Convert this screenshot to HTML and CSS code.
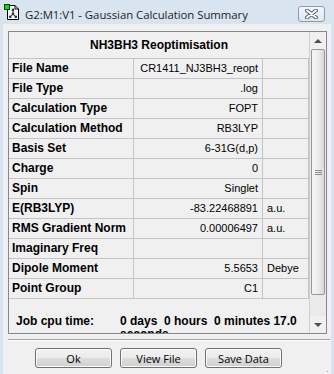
FILE: index.html
```html
<!DOCTYPE html>
<html lang="en">

<head>
    <meta charset="UTF-8">
    <meta name="viewport" content="width=device-width, initial-scale=1.0">
    <title>G2:M1:V1 - Gaussian Calculation Summary</title>
    <link rel="stylesheet" href="styles.css">
</head>

<body>
    <div class="window">
        <!-- Title bar -->
        <div class="titlebar">
            <svg class="app-icon" width="16" height="16" viewBox="0 0 16 16">
                <path d="M3.5 1.5 H11 L14.5 5 V15.5 H3.5 Z" fill="#fff" stroke="#000" />
                <path d="M11 1.5 V5 H14.5" fill="none" stroke="#000" />
                <line x1="9" y1="6" x2="9" y2="10" stroke="#444" />
                <line x1="9" y1="10" x2="6.5" y2="12.5" stroke="#444" />
                <line x1="9" y1="10" x2="11.5" y2="12.5" stroke="#444" />
                <circle cx="9" cy="6" r="1.4" fill="#333" />
                <circle cx="9" cy="10" r="1.4" fill="#333" />
                <circle cx="6.2" cy="12.8" r="1.4" fill="#333" />
                <circle cx="11.8" cy="12.8" r="1.4" fill="#333" />
                <rect x="0.5" y="0.5" width="5" height="5" fill="#19d419" stroke="#064d06" />
            </svg>
            <span class="title">G2:M1:V1 - Gaussian Calculation Summary</span>
            <div class="close-btn">
                <svg width="13" height="10" viewBox="0 0 13 10">
                    <path d="M2 1.5 L11 8.5 M11 1.5 L2 8.5" stroke="#5b6470" stroke-width="4" stroke-linecap="round" />
                    <path d="M2 1.5 L11 8.5 M11 1.5 L2 8.5" stroke="#fff" stroke-width="2" stroke-linecap="round" />
                </svg>
            </div>
        </div>

        <!-- Client area -->
        <div class="client">
            <div class="grid-box">
                <div class="grid-view">
                    <div class="grid-head">NH3BH3 Reoptimisation</div>
                    <div class="grid-row"><div class="label">File Name</div><div class="value">CR1411_NJ3BH3_reopt</div><div class="unit"></div></div>
                    <div class="grid-row"><div class="label">File Type</div><div class="value">.log</div><div class="unit"></div></div>
                    <div class="grid-row"><div class="label">Calculation Type</div><div class="value">FOPT</div><div class="unit"></div></div>
                    <div class="grid-row"><div class="label">Calculation Method</div><div class="value">RB3LYP</div><div class="unit"></div></div>
                    <div class="grid-row"><div class="label">Basis Set</div><div class="value">6-31G(d,p)</div><div class="unit"></div></div>
                    <div class="grid-row"><div class="label">Charge</div><div class="value">0</div><div class="unit"></div></div>
                    <div class="grid-row"><div class="label">Spin</div><div class="value">Singlet</div><div class="unit"></div></div>
                    <div class="grid-row"><div class="label">E(RB3LYP)</div><div class="value">-83.22468891</div><div class="unit">a.u.</div></div>
                    <div class="grid-row"><div class="label">RMS Gradient Norm</div><div class="value">0.00006497</div><div class="unit">a.u.</div></div>
                    <div class="grid-row"><div class="label">Imaginary Freq</div><div class="value"></div><div class="unit"></div></div>
                    <div class="grid-row"><div class="label">Dipole Moment</div><div class="value">5.5653</div><div class="unit">Debye</div></div>
                    <div class="grid-row"><div class="label">Point Group</div><div class="value">C1</div><div class="unit"></div></div>

                    <div class="cpu">
                        <div class="cpu-label">Job cpu time:</div>
                        <div class="cpu-value">0 days  0 hours  0 minutes 17.0 seconds</div>
                    </div>
                </div>

                <div class="scrollbar">
                    <div class="sb-arrow"><span class="tri-up"></span></div>
                    <div class="sb-thumb">
                        <svg width="7" height="5" viewBox="0 0 7 5">
                            <path d="M0 0.5 H7 M0 2.5 H7 M0 4.5 H7" stroke="#8a8a8a" />
                        </svg>
                    </div>
                    <div class="sb-track"></div>
                    <div class="sb-arrow"><span class="tri-down"></span></div>
                </div>
            </div>

            <div class="separator"></div>

            <div class="buttons">
                <button class="btn">Ok</button>
                <button class="btn">View File</button>
                <button class="btn">Save Data</button>
            </div>

            <svg class="size-grip" width="10" height="10" viewBox="0 0 10 10">
                <rect x="8" y="2" width="1" height="1" fill="#a0a0a0" />
                <rect x="5" y="5" width="1" height="1" fill="#a0a0a0" />
                <rect x="8" y="5" width="1" height="1" fill="#a0a0a0" />
                <rect x="2" y="8" width="1" height="1" fill="#a0a0a0" />
                <rect x="5" y="8" width="1" height="1" fill="#a0a0a0" />
                <rect x="8" y="8" width="1" height="1" fill="#a0a0a0" />
            </svg>
        </div>
    </div>
</body>

</html>
```

FILE: styles.css
```css
/* Window frame */

body {
    margin: 0;
    padding: 0;
    background-color: #d9e4f1;
    font-family: 'Liberation Sans', Arial, sans-serif;
    overflow: hidden;
}

.window {
    width: 334px;
    height: 374px;
}

.titlebar {
    height: 24px;
    display: flex;
    align-items: flex-start;
    padding: 0 9px 0 4px;
    box-sizing: border-box;
}

.app-icon {
    margin-top: 4px;
    flex-shrink: 0;
}

.title {
    flex: 1;
    margin: 7px 0 0 5px;
    font-family: 'Open Sans', sans-serif;
    font-size: 11.4px;
    letter-spacing: -0.05px;
    line-height: 16px;
    color: #1e1e1e;
    white-space: nowrap;
}

.close-btn {
    width: 25px;
    height: 14px;
    margin-top: 6px;
    border: 1px solid #8f9bab;
    border-radius: 3px;
    background: linear-gradient(#f4f7fb, #dde5ef);
    display: flex;
    align-items: center;
    justify-content: center;
}

/* Client area */

.client {
    position: relative;
    margin: 0 3px;
    height: 350px;
    padding: 7px 4px 0 5px;
    background-color: #f0f0f0;
}

.grid-box {
    display: flex;
    width: 319px;
    height: 303px;
    box-sizing: border-box;
    border: 1px solid #828790;
    background-color: #f0f0f0;
}

.grid-view {
    flex: 1;
    overflow: hidden;
}

.grid-head {
    height: 26px;
    line-height: 26px;
    border-bottom: 1px solid #c4c4c4;
    text-align: center;
    font-weight: bold;
    font-size: 12px;
    color: #000;
}

.grid-row {
    display: grid;
    grid-template-columns: 125px 129px 46px;
    height: 20px;
    box-sizing: border-box;
    border-bottom: 1px solid #c4c4c4;
}

.grid-row div {
    border-right: 1px solid #c4c4c4;
    line-height: 19px;
    white-space: nowrap;
    overflow: hidden;
}

.label {
    padding-left: 3px;
    font-weight: bold;
    font-size: 12px;
    color: #000;
}

.value {
    padding-right: 4px;
    text-align: right;
    font-size: 11px;
    color: #000;
}

.unit {
    padding-left: 4px;
    font-size: 11px;
    color: #000;
}

.cpu {
    display: flex;
    padding: 16px 0 0 7px;
    font-weight: bold;
    font-size: 12px;
    line-height: 13px;
    color: #000;
}

.cpu-label {
    width: 104px;
    flex-shrink: 0;
}

.cpu-value {
    width: 182px;
    white-space: pre-wrap;
}

/* Scrollbar */

.scrollbar {
    width: 17px;
    display: flex;
    flex-direction: column;
    border-left: 1px solid #cfcfcf;
    box-sizing: border-box;
    background-color: #eaeaea;
}

.sb-arrow {
    height: 17px;
    display: flex;
    align-items: center;
    justify-content: center;
    background-color: #f0f0f0;
}

.tri-up {
    width: 0;
    height: 0;
    border-left: 4px solid transparent;
    border-right: 4px solid transparent;
    border-bottom: 4px solid #505050;
}

.tri-down {
    width: 0;
    height: 0;
    border-left: 4px solid transparent;
    border-right: 4px solid transparent;
    border-top: 4px solid #505050;
}

.sb-thumb {
    height: 246px;
    margin: 0 1px;
    box-sizing: border-box;
    border: 1px solid #979797;
    border-radius: 2px;
    background: linear-gradient(to right, #f6f6f6, #ececec 50%, #d9d9d9);
    display: flex;
    align-items: center;
    justify-content: center;
}

.sb-track {
    flex: 1;
}

/* Bottom buttons */

.separator {
    margin-top: 5px;
    border-top: 1px solid #a0a0a0;
    border-bottom: 1px solid #ffffff;
    width: 322px;
}

.buttons {
    display: flex;
    gap: 8px;
    margin: 7px 0 0 27px;
}

.btn {
    width: 77px;
    height: 20px;
    padding: 0;
    border: 1px solid #707070;
    border-radius: 3px;
    background: linear-gradient(#f2f2f2 0%, #ebebeb 50%, #dddddd 51%, #cfcfcf 100%);
    box-shadow: inset 0 0 0 1px #fbfbfb;
    font-family: 'Open Sans', sans-serif;
    font-size: 11px;
    color: #000;
}

.size-grip {
    position: absolute;
    right: 2px;
    bottom: 2px;
}
```
